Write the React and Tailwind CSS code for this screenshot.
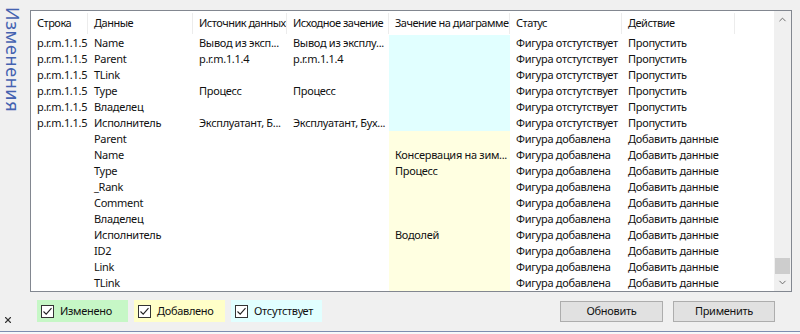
import { ChevronUp, ChevronDown, X } from 'lucide-react'

const cols = 'grid grid-cols-[57px_105px_94px_102px_121px_112px_113px_1fr]'

const rows = [
    ['p.r.m.1.1.5', 'Name', 'Вывод из эксп...', 'Вывод из эксплу...', '', 'Фигура отстутствует', 'Пропустить', 'miss'],
    ['p.r.m.1.1.5', 'Parent', 'p.r.m.1.1.4', 'p.r.m.1.1.4', '', 'Фигура отстутствует', 'Пропустить', 'miss'],
    ['p.r.m.1.1.5', 'TLink', '', '', '', 'Фигура отстутствует', 'Пропустить', 'miss'],
    ['p.r.m.1.1.5', 'Type', 'Процесс', 'Процесс', '', 'Фигура отстутствует', 'Пропустить', 'miss'],
    ['p.r.m.1.1.5', 'Владелец', '', '', '', 'Фигура отстутствует', 'Пропустить', 'miss'],
    ['p.r.m.1.1.5', 'Исполнитель', 'Эксплуатант, Б...', 'Эксплуатант, Бух...', '', 'Фигура отстутствует', 'Пропустить', 'miss'],
    ['', 'Parent', '', '', '', 'Фигура добавлена', 'Добавить данные', 'add'],
    ['', 'Name', '', '', 'Консервация на зим...', 'Фигура добавлена', 'Добавить данные', 'add'],
    ['', 'Type', '', '', 'Процесс', 'Фигура добавлена', 'Добавить данные', 'add'],
    ['', '_Rank', '', '', '', 'Фигура добавлена', 'Добавить данные', 'add'],
    ['', 'Comment', '', '', '', 'Фигура добавлена', 'Добавить данные', 'add'],
    ['', 'Владелец', '', '', '', 'Фигура добавлена', 'Добавить данные', 'add'],
    ['', 'Исполнитель', '', '', 'Водолей', 'Фигура добавлена', 'Добавить данные', 'add'],
    ['', 'ID2', '', '', '', 'Фигура добавлена', 'Добавить данные', 'add'],
    ['', 'Link', '', '', '', 'Фигура добавлена', 'Добавить данные', 'add'],
    ['', 'TLink', '', '', '', 'Фигура добавлена', 'Добавить данные', 'add'],
]

const headers = ['Строка', 'Данные', 'Источник данных', 'Исходное зачение', 'Зачение на диаграмме', 'Статус', 'Действие']

function Check({ label, bg }) {
    return (
        <div className={`w-[91px] h-[22px] flex items-center pl-[4px] gap-[6px] ${bg}`}>
            <div className="w-[13px] h-[13px] border border-[#333] bg-white flex items-center justify-center">
                <svg width="11" height="11" viewBox="0 0 11 11">
                    <path d="M1.5 5.5 L4.2 8.2 L9.5 2.2" fill="none" stroke="#222" strokeWidth="1.1" />
                </svg>
            </div>
            <span>{label}</span>
        </div>
    )
}

export default function App() {
    return (
        <div
            className="w-[800px] h-[334px] bg-[#f0f0f0] flex flex-col text-[11px] tracking-[-0.3px] text-[#111] overflow-hidden"
            style={{ fontFamily: '"Segoe UI", "Noto Sans", sans-serif' }}
        >
            <div className="flex flex-1 min-h-0">
                {/* Left strip */}
                <div className="w-[30px] flex flex-col items-start justify-between pt-[7px] pb-[6px]">
                    <span className="[writing-mode:vertical-rl] text-[18px] leading-none text-[#4462b0] ml-[4px] tracking-[0.6px]">
                        Изменения
                    </span>
                    <X size={10} strokeWidth={2.6} className="ml-[3px] text-[#333]" />
                </div>

                {/* Main */}
                <div className="flex-1 flex flex-col pt-[10px] pr-[8px]">
                    <div className="border border-[#828790] bg-white flex h-[282px]">
                        <div className="flex-1">
                            <div className={`${cols} h-[24px] items-center tracking-[-0.5px]`}>
                                {headers.map((h, i) => (
                                    <div key={i} className="h-[21px] flex items-center pl-[6px] border-r border-[#ececec] whitespace-nowrap overflow-hidden">
                                        {h}
                                    </div>
                                ))}
                                <div />
                            </div>
                            {rows.map((r, i) => (
                                <div key={i} className={`${cols} h-[16px]`}>
                                    {r.slice(0, 7).map((c, j) => (
                                        <div
                                            key={j}
                                            className={`pl-[6px] leading-[16px] whitespace-nowrap overflow-hidden ${
                                                j === 4 ? (r[7] === 'miss' ? 'bg-[#e1ffff]' : 'bg-[#ffffe1]') : ''
                                            }`}
                                        >
                                            {c}
                                        </div>
                                    ))}
                                    <div />
                                </div>
                            ))}
                        </div>
                        {/* Scrollbar */}
                        <div className="w-[17px] bg-[#f0f0f0] flex flex-col items-center">
                            <div className="h-[17px] flex items-center justify-center">
                                <ChevronUp size={11} strokeWidth={2} className="text-[#606060]" />
                            </div>
                            <div className="flex-1 w-full flex flex-col justify-end">
                                <div className="h-[16px] mx-[1px] bg-[#cdcdcd]" />
                            </div>
                            <div className="h-[17px] flex items-center justify-center">
                                <ChevronDown size={11} strokeWidth={2} className="text-[#606060]" />
                            </div>
                        </div>
                    </div>

                    {/* Bottom bar */}
                    <div className="flex items-center justify-between pt-[8px] pl-[7px]">
                        <div className="flex gap-[6px]">
                            <Check label="Изменено" bg="bg-[#c6f7c6]" />
                            <Check label="Добавлено" bg="bg-[#ffffc8]" />
                            <Check label="Отсутствует" bg="bg-[#e1ffff]" />
                        </div>
                        <div className="flex gap-[10px] mr-[17px]">
                            <button className="w-[103px] h-[21px] bg-[#e1e1e1] border border-[#adadad]">Обновить</button>
                            <button className="w-[102px] h-[21px] bg-[#e1e1e1] border border-[#adadad]">Применить</button>
                        </div>
                    </div>
                </div>
            </div>
            <div className="h-[3px] border-t border-[#7e8db0] bg-[#f7f8fa]" />
        </div>
    )
}
